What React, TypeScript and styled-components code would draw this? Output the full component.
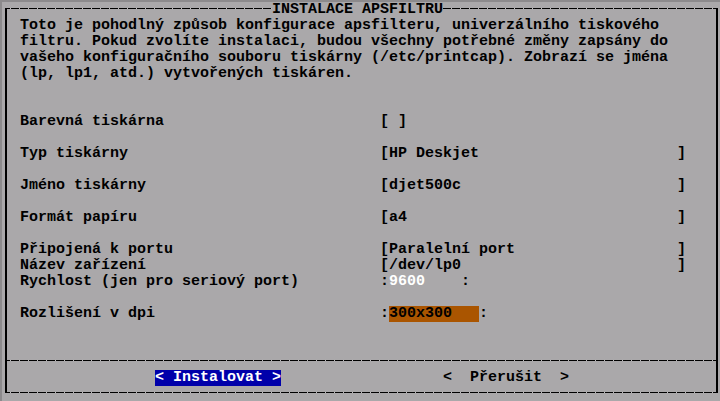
import styled, { createGlobalStyle } from "styled-components";

const GlobalStyle = createGlobalStyle`
  html, body {
    margin: 0;
    padding: 0;
    background: #aaa8aa;
  }
  body {
    font-family: "Liberation Mono", "DejaVu Sans Mono", monospace;
  }
`;

// one text cell of the console is 9x16
const CELL = 9;

const colors = {
  screen: "#aaa8aa",
  shade: "#8c8a8c",
  ink: "#000000",
  gap: "#bdbbbd",
  focus: "#0000aa",
  entry: "#aa5500",
  white: "#ffffff",
};

const dashes = (x: number, y: number) => `
  background-image: linear-gradient(to right, ${colors.gap} 0 1px, ${colors.ink} 1px 9px);
  background-size: 9px 1px;
  background-repeat: repeat-x;
  background-position: ${x}px ${y}px;
`;

const intro = [
  "Toto je pohodlný způsob konfigurace apsfilteru, univerzálního tiskového",
  "filtru. Pokud zvolíte instalaci, budou všechny potřebné změny zapsány do",
  "vašeho konfiguračního souboru tiskárny (/etc/printcap). Zobrazí se jména",
  "(lp, lp1, atd.) vytvořených tiskáren.",
];

type Field = {
  label: string;
  kind: "check" | "text" | "entry";
  value?: string;
  width?: number;
  tone?: "plain" | "active";
  gap: boolean;
};

const fields: Field[] = [
  { label: "Barevná tiskárna", kind: "check", gap: false },
  { label: "Typ tiskárny", kind: "text", value: "HP Deskjet", gap: true },
  { label: "Jméno tiskárny", kind: "text", value: "djet500c", gap: true },
  { label: "Formát papíru", kind: "text", value: "a4", gap: true },
  { label: "Připojená k portu", kind: "text", value: "Paralelní port", gap: true },
  { label: "Název zařízení", kind: "text", value: "/dev/lp0", gap: false },
  { label: "Rychlost (jen pro seriový port)", kind: "entry", value: "9600", width: 8, tone: "plain", gap: false },
  { label: "Rozlišení v dpi", kind: "entry", value: "300x300", width: 10, tone: "active", gap: true },
];

function FieldValue({ field }: { field: Field }) {
  if (field.kind === "check") {
    return (
      <Bracket>
        [<Slot $chars={1} />]
      </Bracket>
    );
  }
  if (field.kind === "text") {
    return (
      <Bracket>
        [<Slot $chars={32}>{field.value}</Slot>]
      </Bracket>
    );
  }
  return (
    <Bracket>
      :<Entry $chars={field.width ?? 8} $tone={field.tone ?? "plain"}>{field.value}</Entry>:
    </Bracket>
  );
}

export default function App() {
  return (
    <>
      <GlobalStyle />
      <Screen>
        <Frame>
          <Header>
            <Edge $side="left" />
            <Title>INSTALACE APSFILTRU</Title>
            <Edge $side="right" />
          </Header>
          <Body>
            <Content>
              <Intro>
                {intro.map((line) => (
                  <Line key={line}>{line}</Line>
                ))}
              </Intro>
              <Form>
                {fields.map((f) => (
                  <FieldRow key={f.label} $gap={f.gap}>
                    <Label>{f.label}</Label>
                    <FieldValue field={f} />
                  </FieldRow>
                ))}
              </Form>
            </Content>
            <Divider />
            <ButtonBar>
              <Button $focused>
                <span>&lt;</span>
                <span>Instalovat</span>
                <span>&gt;</span>
              </Button>
              <Button>
                <span>&lt;</span>
                <span>Přerušit</span>
                <span>&gt;</span>
              </Button>
            </ButtonBar>
            <BottomEdge />
          </Body>
        </Frame>
      </Screen>
    </>
  );
}

const Screen = styled.div`
  width: 720px;
  height: 401px;
  box-sizing: border-box;
  padding: 2px 0 0 2px;
  overflow: hidden;

  background: ${colors.screen};
  box-shadow: inset 2px 2px 0 ${colors.shade};

  color: ${colors.ink};
  font-family: "Liberation Mono", "DejaVu Sans Mono", monospace;
  font-weight: bold;
  font-size: 15px;
  line-height: 16px;
`;

const Frame = styled.div`
  margin-left: 3px;
  width: 713px;
  display: flex;
  flex-direction: column;
`;

const Header = styled.div`
  display: flex;
  height: 16px;
`;

const Edge = styled.div<{ $side: "left" | "right" }>`
  align-self: flex-end;
  height: 10px;
  box-sizing: border-box;
  ${(p) =>
    p.$side === "left"
      ? `width: 267px; border-left: 2px solid ${colors.ink}; ${dashes(3, 0)}`
      : `flex: 1; border-right: 2px solid ${colors.ink}; ${dashes(8, 0)}`}
`;

const Title = styled.div`
  width: ${19 * CELL}px;
  white-space: pre;
`;

const Body = styled.div`
  border-left: 2px solid ${colors.ink};
  border-right: 2px solid ${colors.ink};
`;

const Content = styled.div`
  height: ${21 * 16}px;
  padding-left: 13px;
  box-sizing: border-box;
`;

const Intro = styled.div`
  display: flex;
  flex-direction: column;
`;

const Line = styled.div`
  height: 16px;
  white-space: pre;
`;

const Form = styled.div`
  padding-top: 32px;
  display: flex;
  flex-direction: column;
`;

const FieldRow = styled.div<{ $gap: boolean }>`
  display: grid;
  grid-template-columns: ${40 * CELL}px auto;
  height: 16px;
  margin-top: ${(p) => (p.$gap ? "16px" : "0")};
`;

const Label = styled.span`
  white-space: pre;
`;

const Bracket = styled.span`
  display: flex;
  white-space: pre;
`;

const Slot = styled.span<{ $chars: number }>`
  display: inline-block;
  width: ${(p) => p.$chars * CELL}px;
  white-space: pre;
`;

const Entry = styled.span<{ $chars: number; $tone: "plain" | "active" }>`
  display: inline-block;
  width: ${(p) => p.$chars * CELL}px;
  white-space: pre;
  background: ${(p) => (p.$tone === "active" ? colors.entry : "transparent")};
  color: ${(p) => (p.$tone === "active" ? colors.ink : colors.white)};
`;

const Divider = styled.div`
  height: 16px;
  ${dashes(3, 6)}
`;

const ButtonBar = styled.div`
  display: flex;
  height: 16px;
  padding-left: 148px;
  gap: 162px;
`;

const Button = styled.div<{ $focused?: boolean }>`
  display: flex;
  justify-content: space-between;
  width: ${14 * CELL}px;
  white-space: pre;
  background: ${(p) => (p.$focused ? colors.focus : "transparent")};
  color: ${(p) => (p.$focused ? colors.white : colors.ink)};
`;

const BottomEdge = styled.div`
  height: 7px;
  ${dashes(3, 6)}
`;
